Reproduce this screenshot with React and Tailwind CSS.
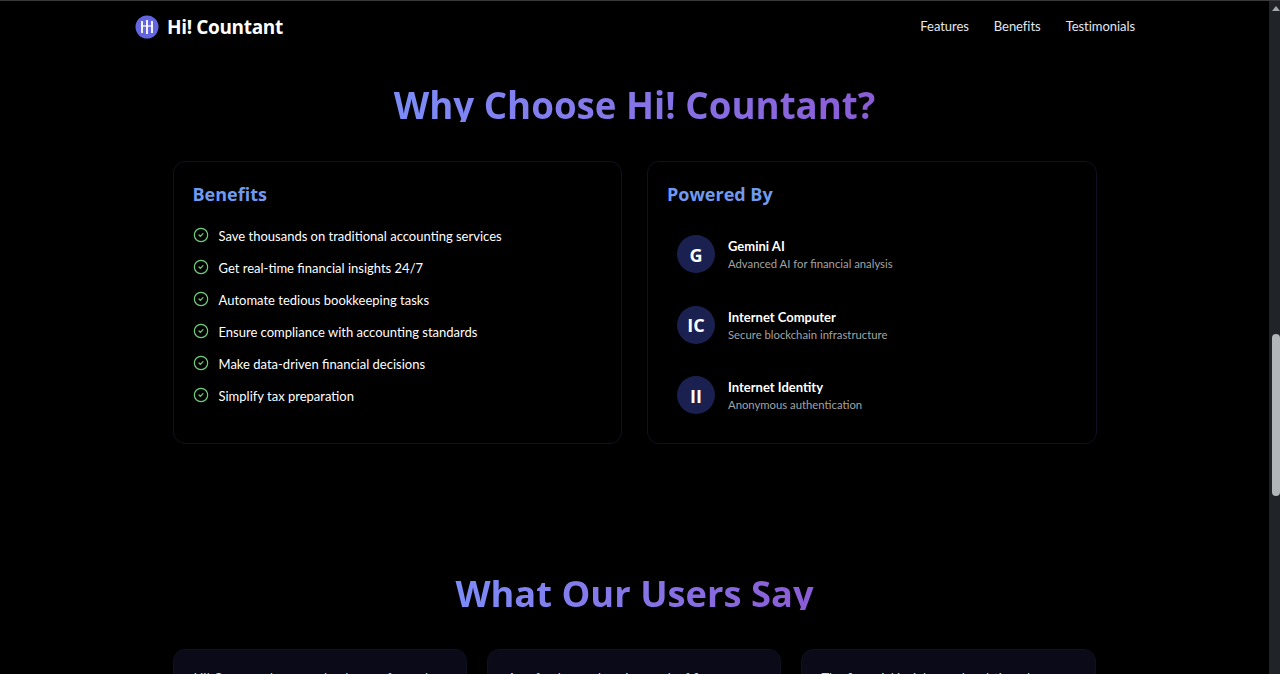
const benefits = [
  "Save thousands on traditional accounting services",
  "Get real-time financial insights 24/7",
  "Automate tedious bookkeeping tasks",
  "Ensure compliance with accounting standards",
  "Make data-driven financial decisions",
  "Simplify tax preparation",
];
const tech = [
  ["G", "Gemini AI", "Advanced AI for financial analysis"],
  ["IC", "Internet Computer", "Secure blockchain infrastructure"],
  ["II", "Internet Identity", "Anonymous authentication"],
];
const quotes = [
  "Hi! Countant has completely transformed how",
  "As a freelancer, keeping track of finances",
  "The financial insights and real-time data",
];
function Check() {
  return (
    <svg width="16" height="16" viewBox="0 0 24 24" fill="none" stroke="#6fcf7c" strokeWidth="1.8" strokeLinecap="round" strokeLinejoin="round" className="shrink-0">
      <circle cx="12" cy="12" r="10" />
      <path d="m9 12 2 2 4-4" />
    </svg>
  );
}
function Logo() {
  return (
    <svg width="24" height="24" viewBox="0 0 24 24" className="shrink-0">
      <circle cx="12" cy="12" r="11.5" fill="#6366e0" />
      <path d="M7 6v12M12 5v14M17 6v12" stroke="#fff" strokeWidth="1.8" fill="none" />
      <path d="M6 11h12" stroke="#fff" strokeWidth="1.2" fill="none" />
    </svg>
  );
}
export default function App() {
  return (
    <div className="h-[674px] w-[1280px] overflow-hidden flex flex-col bg-black text-white" style={{ fontFamily: '"Open Sans","Noto Sans",sans-serif' }}>
      <div className="h-px shrink-0 bg-[#3a3a3c]" />
      <div className="flex-1 min-h-0 flex">
        <main className="flex-1 min-w-0 overflow-hidden">
          <nav className="mx-auto w-[999px] h-[52px] flex items-center justify-between">
            <div className="flex items-center gap-2">
              <Logo />
              <span className="text-[19px] tracking-[-0.35px] font-bold">Hi! Countant</span>
            </div>
            <div className="flex gap-[25px] -mr-[1px] tracking-[-0.05px] text-[13px] leading-[18px] pb-[2px] text-[#e5e7eb] font-['Lato']">
              <span>Features</span>
              <span>Benefits</span>
              <span>Testimonials</span>
            </div>
          </nav>
          <h1 className="mt-[29px] h-[40px] text-center text-[36.7px] leading-[46px] font-bold">
            <span className="inline-block h-[40px] bg-gradient-to-r from-[#7c8cf8] to-[#8b5cd6] bg-clip-text text-transparent">Why Choose Hi! Countant?</span>
          </h1>
          <div className="mx-auto mt-[39px] w-[924px] grid grid-cols-2 gap-[25px]">
            <section className="h-[283px] rounded-[12px] border border-[#0f1120] bg-black px-[19px] pt-[18px]">
              <h2 className="text-[18px] leading-[28px] font-bold text-[#6f9af0]">Benefits</h2>
              <ul className="mt-[17px] flex flex-col gap-[12px] font-['Lato']">
                {benefits.map((b) => (
                  <li key={b} className="flex items-center gap-[10px] h-[20px] text-[13px] text-white">
                    <Check />
                    <span className="pt-[3px]">{b}</span>
                  </li>
                ))}
              </ul>
            </section>
            <section className="h-[283px] rounded-[12px] border border-[#0f1120] bg-black px-[19px] pt-[18px]">
              <h2 className="text-[18px] leading-[28px] font-bold text-[#6f9af0]">Powered By</h2>
              <div className="mt-[26px] flex flex-col gap-[30.5px] pl-[10px] font-['Lato']">
                {tech.map(([i, t, d]) => (
                  <div key={t} className="flex items-center gap-[13px] h-[40px]">
                    <div className="w-[38px] h-[38px] pt-[2px] rounded-full bg-[#1a2150] flex items-center justify-center text-[18px] font-bold font-['Open_Sans']">{i}</div>
                    <div className="pt-[1px]">
                      <div className="text-[13px] leading-[18px] font-bold">{t}</div>
                      <div className="text-[11.3px] leading-[17px] text-[#a3a3a3]">{d}</div>
                    </div>
                  </div>
                ))}
              </div>
            </section>
          </div>
          <h1 className="mt-[126px] h-[40px] text-center text-[36.3px] leading-[46px] font-bold">
            <span className="inline-block h-[40px] bg-gradient-to-r from-[#7c8cf8] to-[#8b5cd6] bg-clip-text text-transparent">What Our Users Say</span>
          </h1>
          <div className="mx-auto mt-[39px] w-[924px] grid grid-cols-[294px_294px_295px] gap-[20px]">
            {quotes.map((q) => (
              <div key={q} className="h-[200px] rounded-[12px] border border-[#0f1120] bg-[#0a0a18] px-[20px] pt-[19px] text-[13px] font-['Lato'] text-[#d1d5db]">{q}</div>
            ))}
          </div>
        </main>
        <aside className="w-[11px] shrink-0 bg-[#202327] relative">
          <div className="absolute left-[3px] top-[5px] w-0 h-0 border-l-[4px] border-r-[4px] border-b-[5px] border-l-transparent border-r-transparent border-b-[#a5a8ab]" />
          <div className="absolute left-[3px] right-0 top-[333px] h-[162px] rounded-full bg-[#b1b6b8]" />
        </aside>
      </div>
    </div>
  );
}
